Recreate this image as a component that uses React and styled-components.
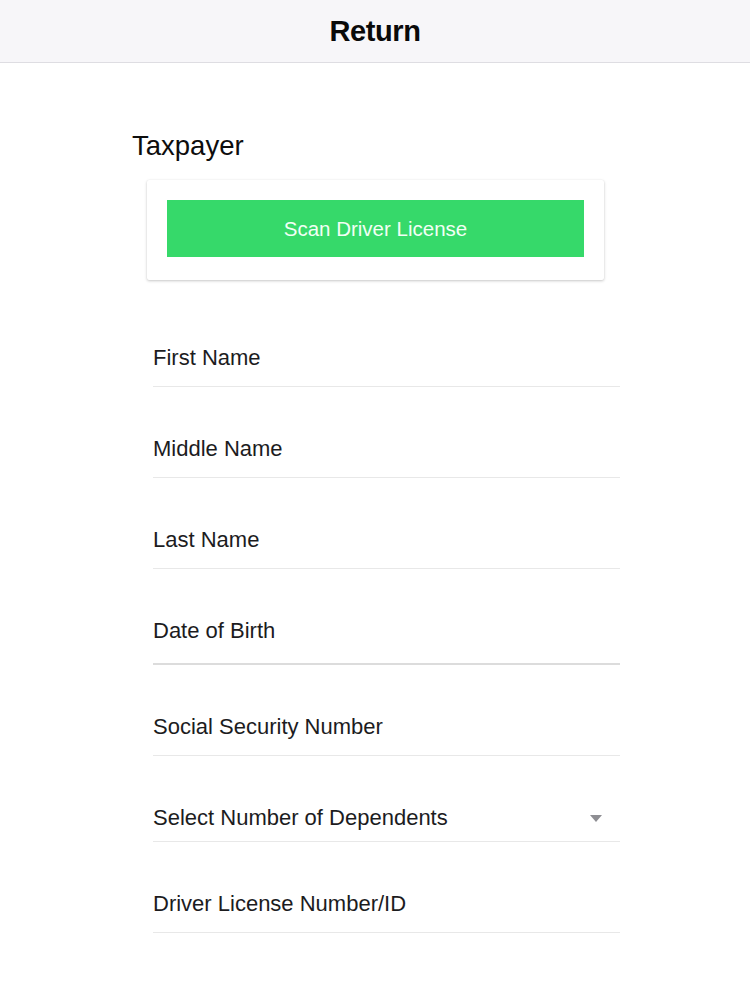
import React from 'react';
import styled, { createGlobalStyle } from 'styled-components';

const GlobalStyle = createGlobalStyle`
    body {
        margin: 0;
        background: #ffffff;
        font-family: 'Liberation Sans', Arial, sans-serif;
        color: #1c1c1e;
    }
`;

const Page = styled.div`
    width: 750px;
    min-height: 1000px;
    background: #ffffff;
`;

const Header = styled.header`
    height: 62px;
    display: flex;
    align-items: center;
    justify-content: center;
    background: #f7f6f9;
    border-bottom: 1px solid #dedde2;
`;

const Title = styled.h1`
    margin: 0;
    font-size: 29px;
    font-weight: bold;
    letter-spacing: -0.4px;
    color: #0a0a0a;
`;

const Content = styled.main`
    display: flex;
    flex-direction: column;
    margin: 0 130px 0 132px;
    padding-top: 68px;
`;

const Heading = styled.h2`
    margin: 0 0 19px;
    font-size: 27.5px;
    line-height: 30px;
    font-weight: normal;
    color: #0d0d0d;
`;

const Card = styled.div`
    margin: 0 16px 0 15px;
    padding: 20px 20px 23px;
    background: #ffffff;
    border-radius: 2px;
    box-shadow: 0 1px 3px rgba(0, 0, 0, 0.22), 0 0 1px rgba(0, 0, 0, 0.08);
`;

const ScanButton = styled.button`
    width: 100%;
    height: 57px;
    border: none;
    background: #36d96a;
    color: #f2fff5;
    font-family: 'Liberation Sans', Arial, sans-serif;
    font-size: 20.5px;
    cursor: pointer;
`;

const Fields = styled.div`
    display: flex;
    flex-direction: column;
    margin-left: 21px;
    margin-top: 16px;
`;

const Field = styled.div`
    display: flex;
    align-items: center;
    justify-content: space-between;
    padding: 50px 18px ${props => props.bottom || 16}px 0;
    border-bottom: ${props => (props.strong ? '2px solid #dcdcdc' : '1px solid #e8e8e8')};
`;

const Label = styled.span`
    font-size: 22px;
    line-height: 24px;
    color: #1c1c1e;
`;

const Caret = () => (
    <svg width="12" height="7" viewBox="0 0 12 7">
        <path d="M0 0 H12 L6 7 Z" fill="#8e8e93" />
    </svg>
);

const fields = [
    { label: 'First Name' },
    { label: 'Middle Name' },
    { label: 'Last Name' },
    { label: 'Date of Birth', bottom: 20, strong: true },
    { label: 'Social Security Number', bottom: 16 },
    { label: 'Select Number of Dependents', bottom: 11, select: true },
    { label: 'Driver License Number/ID', bottom: 16 },
];

const App = () => {
    return (
        <>
            <GlobalStyle />
            <Page>
                <Header>
                    <Title>Return</Title>
                </Header>
                <Content>
                    <Heading>Taxpayer</Heading>
                    <Card>
                        <ScanButton>Scan Driver License</ScanButton>
                    </Card>
                    <Fields>
                        {fields.map(f => (
                            <Field key={f.label} bottom={f.bottom} strong={f.strong}>
                                <Label>{f.label}</Label>
                                {f.select && <Caret />}
                            </Field>
                        ))}
                    </Fields>
                </Content>
            </Page>
        </>
    );
};

export default App;
